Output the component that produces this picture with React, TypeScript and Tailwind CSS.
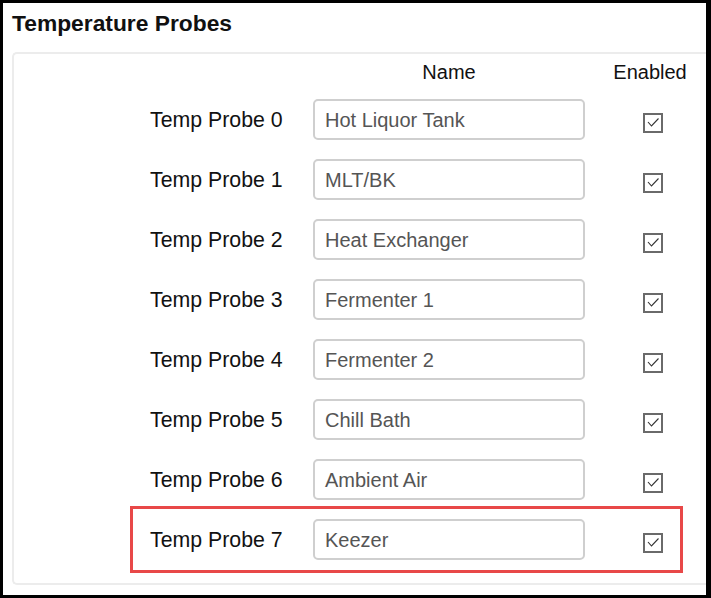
import React from "react";

const probes = [
  "Hot Liquor Tank",
  "MLT/BK",
  "Heat Exchanger",
  "Fermenter 1",
  "Fermenter 2",
  "Chill Bath",
  "Ambient Air",
  "Keezer",
];

function Check() {
  return (
    <svg width="20" height="20" viewBox="0 0 20 20" className="block">
      <rect x="1" y="1" width="18" height="18" fill="#fff" stroke="#6a6a6a" strokeWidth="2" />
      <polyline points="5,9 8.5,13 15.5,5.5" fill="none" stroke="#333" strokeWidth="1.1" />
    </svg>
  );
}

export default function App() {
  return (
    <div
      className="w-[711px] h-[598px] bg-white border-black border-t-[3px] border-l-[3px] border-b-[3px] border-r-[5px] overflow-hidden"
      style={{ fontFamily: '"Liberation Sans", Arial, sans-serif' }}
    >
      <div className="pl-[9px] pt-[7px] text-[22.8px] leading-[26px] font-bold text-[#111]">
        Temperature Probes
      </div>
      <div className="ml-[9px] mt-[16px] border-2 border-r-0 border-[#ececec] rounded-l-[5px] pb-[14px]">
        <div className="flex h-[35px] items-center pl-[136px] text-[20px] text-[#111]">
          <div className="w-[163px] shrink-0" />
          <div className="w-[272px] shrink-0 text-center">Name</div>
          <div className="w-[130px] shrink-0 text-center">Enabled</div>
        </div>
        {probes.map((name, i) => (
          <div key={i} className="relative flex h-[60px] items-center pl-[136px]">
            {i === 7 && (
              <div className="absolute left-[116px] w-[553px] top-[-3px] bottom-[-4px] border-[3px] border-[#e84848] pointer-events-none" />
            )}
            <div className="w-[163px] shrink-0 pt-[3px] text-[21.3px] text-[#111]">Temp Probe {i}</div>
            <div className="w-[272px] shrink-0 h-[41px] border-2 border-[#cfcfcf] rounded-[5px] flex items-center pl-[10px] pt-[2px] text-[20px] text-[#555]">
              {name}
            </div>
            <div className="w-[136px] shrink-0 flex justify-center mt-[8px]">
              <Check />
            </div>
          </div>
        ))}
      </div>
    </div>
  );
}
